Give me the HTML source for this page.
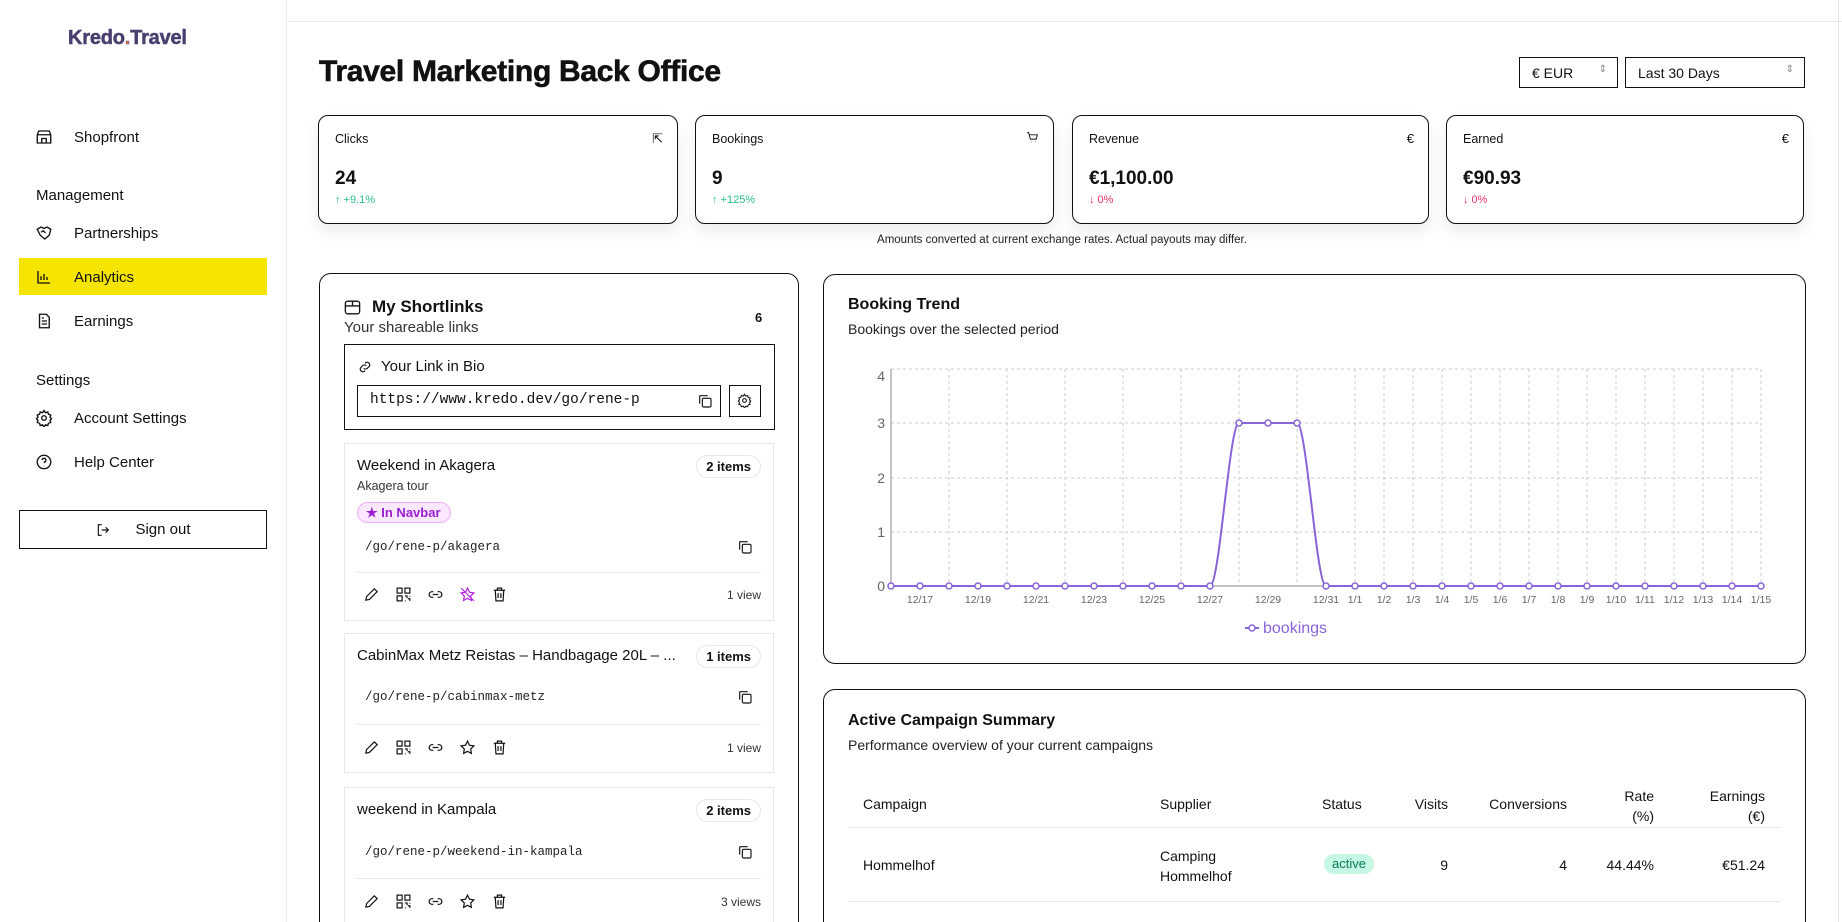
<!DOCTYPE html>
<html style="width:1842px;height:922px;overflow:hidden"><head><meta charset="utf-8"><style>
*{box-sizing:border-box;margin:0;padding:0}
body{width:1842px;height:922px;overflow:hidden;background:#fff;font-family:"Liberation Sans",sans-serif;color:#111;position:relative}
.a{position:absolute}
.side{left:0;top:0;width:287px;height:922px;border-right:1px solid #eee;background:#fff}
.nav{position:absolute;left:35px;font-size:15px;color:#111;display:flex;align-items:center}
.nav svg{width:18px;height:18px;margin-right:21px;fill:none;stroke:#111;stroke-width:1.8}
.lbl{position:absolute;left:36px;font-size:15px;color:#111}
.card{position:absolute;top:115px;height:109px;border:1px solid #111;border-radius:10px;box-shadow:0 8px 16px rgba(0,0,0,.08);background:#fff}
.card .t{position:absolute;left:16px;top:16px;font-size:12.5px}
.card .ic{position:absolute;right:14px;top:15px;font-size:13px}
.card .v{position:absolute;left:16px;top:52px;font-size:19px;font-weight:bold}
.card .c{position:absolute;left:16px;top:78px;font-size:11px}
.panel{position:absolute;border:1px solid #111;border-radius:12px;background:#fff}
.item{position:absolute;left:344px;width:430px;border:1px solid #e5e7eb;background:#fff}
.item .tt{position:absolute;left:12px;font-size:15px;color:#111}
.badge{position:absolute;right:12px;border:1px solid #e5e7eb;border-radius:12px;font-size:13px;font-weight:bold;padding:3px 9px}
.slug{position:absolute;left:20px;font-family:"Liberation Mono",monospace;font-size:12.5px;color:#222}
.div{position:absolute;left:12px;right:12px;height:1px;background:#e5e7eb}
.acts{position:absolute;left:18px;display:flex;gap:15px}
.acts svg{width:17px;height:17px;fill:none;stroke:#111;stroke-width:1.7}
.views{position:absolute;right:12px;font-size:12px;color:#333}
.cp{position:absolute;right:20px;width:16px;height:16px}
svg.s{fill:none;stroke:#111;stroke-width:1.7}
</style></head><body>

<div class="a side">
  <div class="a" style="left:68px;top:27px;font-size:20px;font-weight:bold;color:#4a3f6e;letter-spacing:-0.2px;-webkit-text-stroke:0.5px #4a3f6e">Kredo<span style="color:#f07a4a">.</span>Travel</div>
  <div class="nav" style="top:128px"><svg viewBox="0 0 24 24"><path d="M3 9l2-5h14l2 5M3 9v11h18V9M3 9h18M9 20v-6h6v6"/></svg>Shopfront</div>
  <div class="lbl" style="top:187px">Management</div>
  <div class="nav" style="top:224px"><svg viewBox="0 0 24 24"><path d="M3 7l5-3 4 2 4-2 5 3-2 8-6 5-6-5z M8 11l3-2 3 3"/></svg>Partnerships</div>
  <div class="a" style="left:19px;top:258px;width:248px;height:37px;background:#f5e400"></div>
  <div class="nav" style="top:268px"><svg viewBox="0 0 24 24"><path d="M4 4v16h16M8 16v-5M12 16V8M16 16v-4"/></svg>Analytics</div>
  <div class="nav" style="top:312px"><svg viewBox="0 0 24 24"><path d="M6 3h9l4 4v14H6z M9 12h7M9 16h7M9 8h3"/></svg>Earnings</div>
  <div class="lbl" style="top:372px">Settings</div>
  <div class="nav" style="top:409px"><svg viewBox="0 0 24 24"><circle cx="12" cy="12" r="3"/><path d="M12 2l2 3 3-1 1 3 3 1-1 3 2 2-2 2 1 3-3 1-1 3-3-1-2 3-2-3-3 1-1-3-3-1 1-3-2-2 2-2-1-3 3-1 1-3 3 1z"/></svg>Account Settings</div>
  <div class="nav" style="top:453px"><svg viewBox="0 0 24 24"><circle cx="12" cy="12" r="9"/><path d="M9.5 9.5a2.5 2.5 0 1 1 3 2.5v1.5M12 17v.5"/></svg>Help Center</div>
  <div class="a" style="left:19px;top:510px;width:248px;height:39px;border:1.5px solid #111;display:flex;align-items:center;justify-content:center;font-size:15px">
    <svg class="s" viewBox="0 0 24 24" style="width:16px;height:16px;margin-right:24px"><path d="M10 4H5v16h5M10 12h10M16 8l4 4-4 4"/></svg>Sign out</div>
</div>

<div class="a" style="left:288px;top:21px;width:1554px;height:1px;background:#e8e8e8"></div>
<div class="a" style="left:1838px;top:0;width:1px;height:922px;background:#e5e5e5"></div>

<div class="a" style="left:319px;top:55px;font-size:30px;font-weight:bold;letter-spacing:-0.3px;-webkit-text-stroke:0.6px #111">Travel Marketing Back Office</div>
<div class="a" style="left:1519px;top:57px;width:99px;height:31px;border:1.5px solid #111;font-size:14px;padding:7px 12px">€ EUR<span style="position:absolute;right:10px;top:6px;font-size:10px;color:#888">⇕</span></div>
<div class="a" style="left:1625px;top:57px;width:180px;height:31px;border:1.5px solid #111;font-size:14px;padding:7px 12px">Last 30 Days<span style="position:absolute;right:10px;top:6px;font-size:10px;color:#888">⇕</span></div>

<div class="card" style="left:318px;width:360px"><div class="t">Clicks</div><div class="ic">⇱</div><div class="v">24</div><div class="c" style="color:#2bbf8a">↑ +9.1%</div></div>
<div class="card" style="left:695px;width:359px"><div class="t">Bookings</div><div class="ic"><svg class="s" viewBox="0 0 24 24" style="width:13px;height:13px"><path d="M2 3h3l3 12h11l2-8H6M9 20h1M17 20h1"/></svg></div><div class="v">9</div><div class="c" style="color:#2bbf8a">↑ +125%</div></div>
<div class="card" style="left:1072px;width:357px"><div class="t">Revenue</div><div class="ic">€</div><div class="v">€1,100.00</div><div class="c" style="color:#f0306a">↓ 0%</div></div>
<div class="card" style="left:1446px;width:358px"><div class="t">Earned</div><div class="ic">€</div><div class="v">€90.93</div><div class="c" style="color:#f0306a">↓ 0%</div></div>
<div class="a" style="left:760px;top:234px;width:604px;text-align:center;font-size:11.5px;color:#222">Amounts converted at current exchange rates. Actual payouts may differ.</div>

<!-- Shortlinks -->
<div class="panel" style="left:319px;top:273px;width:480px;height:700px"></div>
<svg class="a s" viewBox="0 0 24 24" style="left:343px;top:298px;width:19px;height:19px"><rect x="3" y="4" width="18" height="16" rx="3"/><path d="M3 10h18M12 4v6"/></svg>
<div class="a" style="left:372px;top:297px;font-size:17px;font-weight:bold">My Shortlinks</div>
<div class="a" style="left:344px;top:319px;font-size:15px;color:#333">Your shareable links</div>
<div class="a" style="left:755px;top:310px;font-size:13px;font-weight:bold">6</div>
<div class="a" style="left:344px;top:344px;width:431px;height:86px;border:1.5px solid #111"></div>
<svg class="a s" viewBox="0 0 24 24" style="left:357px;top:359px;width:16px;height:16px"><path d="M10 14a4 4 0 0 0 5.5 0l3-3a4 4 0 0 0-5.5-5.5l-1 1M14 10a4 4 0 0 0-5.5 0l-3 3a4 4 0 0 0 5.5 5.5l1-1"/></svg>
<div class="a" style="left:381px;top:358px;font-size:15px">Your Link in Bio</div>
<div class="a" style="left:357px;top:385px;width:364px;height:32px;border:1.5px solid #111;font-family:'Liberation Mono',monospace;font-size:14.5px;padding:6px 12px">https://www.kredo.dev/go/rene-p</div>
<svg class="a s" viewBox="0 0 24 24" style="left:697px;top:393px;width:16px;height:16px"><rect x="8" y="8" width="13" height="13" rx="2"/><path d="M4 16V5a1 1 0 0 1 1-1h11"/></svg>
<div class="a" style="left:729px;top:385px;width:32px;height:32px;border:1.5px solid #111"></div>
<svg class="a s" viewBox="0 0 24 24" style="left:737px;top:393px;width:15px;height:15px"><circle cx="12" cy="12" r="3"/><path d="M12 2l2 3 3-1 1 3 3 1-1 3 2 2-2 2 1 3-3 1-1 3-3-1-2 3-2-3-3 1-1-3-3-1 1-3-2-2 2-2-1-3 3-1 1-3 3 1z"/></svg>

<div class="item" style="top:443px;height:178px">
  <div class="tt" style="top:13px">Weekend in Akagera</div>
  <div class="badge" style="top:11px">2 items</div>
  <div class="a" style="left:12px;top:35px;font-size:12.5px;color:#333">Akagera tour</div>
  <div class="a" style="left:12px;top:58px;height:21px;padding:2px 9px 0 8px;border:1px solid #f0abfc;background:#fae8ff;border-radius:11px;font-size:13px;font-weight:bold;color:#9b1fd1">★ In Navbar</div>
  <div class="slug" style="top:96px">/go/rene-p/akagera</div>
  <svg class="cp s" viewBox="0 0 24 24" style="top:95px"><rect x="8" y="8" width="13" height="13" rx="2"/><path d="M4 16V5a1 1 0 0 1 1-1h11"/></svg>
  <div class="div" style="top:128px"></div>
  <div class="acts" style="top:142px">
    <svg viewBox="0 0 24 24"><path d="M4 20l1-5L16 4l4 4L9 19z"/></svg>
    <svg viewBox="0 0 24 24"><rect x="3" y="3" width="7" height="7"/><rect x="14" y="3" width="7" height="7"/><rect x="3" y="14" width="7" height="7"/><path d="M14 14h3v3M21 14v1M14 21h1M18 18h3v3"/></svg>
    <svg viewBox="0 0 24 24"><path d="M9 8H7a4 4 0 0 0 0 8h2M15 8h2a4 4 0 0 1 0 8h-2M8 12h8"/></svg>
    <svg viewBox="0 0 24 24" style="stroke:#b020e0"><path d="M12 3l2.8 5.8 6.2.9-4.5 4.4 1 6.2L12 17.4 6.5 20.3l1-6.2L3 9.7l6.2-.9z M3 3l18 18"/></svg>
    <svg viewBox="0 0 24 24"><path d="M4 6h16M9 6V3h6v3M6 6l1 15h10l1-15M10 10v7M14 10v7"/></svg>
  </div>
  <div class="views" style="top:144px">1 view</div>
</div>

<div class="item" style="top:633px;height:140px">
  <div class="tt" style="top:13px">CabinMax Metz Reistas – Handbagage 20L – ...</div>
  <div class="badge" style="top:11px">1 items</div>
  <div class="slug" style="top:56px">/go/rene-p/cabinmax-metz</div>
  <svg class="cp s" viewBox="0 0 24 24" style="top:55px"><rect x="8" y="8" width="13" height="13" rx="2"/><path d="M4 16V5a1 1 0 0 1 1-1h11"/></svg>
  <div class="div" style="top:90px"></div>
  <div class="acts" style="top:105px">
    <svg viewBox="0 0 24 24"><path d="M4 20l1-5L16 4l4 4L9 19z"/></svg>
    <svg viewBox="0 0 24 24"><rect x="3" y="3" width="7" height="7"/><rect x="14" y="3" width="7" height="7"/><rect x="3" y="14" width="7" height="7"/><path d="M14 14h3v3M21 14v1M14 21h1M18 18h3v3"/></svg>
    <svg viewBox="0 0 24 24"><path d="M9 8H7a4 4 0 0 0 0 8h2M15 8h2a4 4 0 0 1 0 8h-2M8 12h8"/></svg>
    <svg viewBox="0 0 24 24"><path d="M12 3l2.8 5.8 6.2.9-4.5 4.4 1 6.2L12 17.4 6.5 20.3l1-6.2L3 9.7l6.2-.9z"/></svg>
    <svg viewBox="0 0 24 24"><path d="M4 6h16M9 6V3h6v3M6 6l1 15h10l1-15M10 10v7M14 10v7"/></svg>
  </div>
  <div class="views" style="top:107px">1 view</div>
</div>

<div class="item" style="top:787px;height:160px">
  <div class="tt" style="top:13px">weekend in Kampala</div>
  <div class="badge" style="top:11px">2 items</div>
  <div class="slug" style="top:57px">/go/rene-p/weekend-in-kampala</div>
  <svg class="cp s" viewBox="0 0 24 24" style="top:56px"><rect x="8" y="8" width="13" height="13" rx="2"/><path d="M4 16V5a1 1 0 0 1 1-1h11"/></svg>
  <div class="div" style="top:90px"></div>
  <div class="acts" style="top:105px">
    <svg viewBox="0 0 24 24"><path d="M4 20l1-5L16 4l4 4L9 19z"/></svg>
    <svg viewBox="0 0 24 24"><rect x="3" y="3" width="7" height="7"/><rect x="14" y="3" width="7" height="7"/><rect x="3" y="14" width="7" height="7"/><path d="M14 14h3v3M21 14v1M14 21h1M18 18h3v3"/></svg>
    <svg viewBox="0 0 24 24"><path d="M9 8H7a4 4 0 0 0 0 8h2M15 8h2a4 4 0 0 1 0 8h-2M8 12h8"/></svg>
    <svg viewBox="0 0 24 24"><path d="M12 3l2.8 5.8 6.2.9-4.5 4.4 1 6.2L12 17.4 6.5 20.3l1-6.2L3 9.7l6.2-.9z"/></svg>
    <svg viewBox="0 0 24 24"><path d="M4 6h16M9 6V3h6v3M6 6l1 15h10l1-15M10 10v7M14 10v7"/></svg>
  </div>
  <div class="views" style="top:107px">3 views</div>
</div>

<!-- Booking Trend -->
<div class="panel" style="left:823px;top:274px;width:983px;height:390px"></div>
<div class="a" style="left:848px;top:296px;font-size:16px;font-weight:bold">Booking Trend</div>
<div class="a" style="left:848px;top:321px;font-size:14px;color:#222">Bookings over the selected period</div>
<svg class="a" style="left:0;top:0" width="1842" height="922">
  <g stroke="#ccc" stroke-dasharray="3 3" stroke-width="1">
    <line x1="891" y1="369" x2="1761" y2="369"/><line x1="891" y1="423" x2="1761" y2="423"/><line x1="891" y1="478" x2="1761" y2="478"/><line x1="891" y1="532" x2="1761" y2="532"/>
    <line x1="949" y1="369" x2="949" y2="586"/><line x1="1007" y1="369" x2="1007" y2="586"/><line x1="1065" y1="369" x2="1065" y2="586"/><line x1="1123" y1="369" x2="1123" y2="586"/><line x1="1181" y1="369" x2="1181" y2="586"/><line x1="1239" y1="369" x2="1239" y2="586"/><line x1="1297" y1="369" x2="1297" y2="586"/>
    <line x1="1355" y1="369" x2="1355" y2="586"/><line x1="1384" y1="369" x2="1384" y2="586"/><line x1="1413" y1="369" x2="1413" y2="586"/><line x1="1442" y1="369" x2="1442" y2="586"/><line x1="1471" y1="369" x2="1471" y2="586"/><line x1="1500" y1="369" x2="1500" y2="586"/><line x1="1529" y1="369" x2="1529" y2="586"/><line x1="1558" y1="369" x2="1558" y2="586"/><line x1="1587" y1="369" x2="1587" y2="586"/><line x1="1616" y1="369" x2="1616" y2="586"/><line x1="1645" y1="369" x2="1645" y2="586"/><line x1="1674" y1="369" x2="1674" y2="586"/><line x1="1703" y1="369" x2="1703" y2="586"/><line x1="1732" y1="369" x2="1732" y2="586"/><line x1="1761" y1="369" x2="1761" y2="586"/>
  </g>
  <line x1="891" y1="369" x2="891" y2="586" stroke="#888"/>
  <line x1="891" y1="586" x2="1761" y2="586" stroke="#888"/>
  <g font-size="14" fill="#666" text-anchor="end" font-family="Liberation Sans"><text x="885" y="381">4</text><text x="885" y="428">3</text><text x="885" y="483">2</text><text x="885" y="537">1</text><text x="885" y="591">0</text></g>
  <g font-size="10.5" fill="#666" text-anchor="middle" font-family="Liberation Sans">
    <text x="920" y="603">12/17</text><text x="978" y="603">12/19</text><text x="1036" y="603">12/21</text><text x="1094" y="603">12/23</text><text x="1152" y="603">12/25</text><text x="1210" y="603">12/27</text><text x="1268" y="603">12/29</text><text x="1326" y="603">12/31</text>
    <text x="1355" y="603">1/1</text><text x="1384" y="603">1/2</text><text x="1413" y="603">1/3</text><text x="1442" y="603">1/4</text><text x="1471" y="603">1/5</text><text x="1500" y="603">1/6</text><text x="1529" y="603">1/7</text><text x="1558" y="603">1/8</text><text x="1587" y="603">1/9</text><text x="1616" y="603">1/10</text><text x="1645" y="603">1/11</text><text x="1674" y="603">1/12</text><text x="1703" y="603">1/13</text><text x="1732" y="603">1/14</text><text x="1761" y="603">1/15</text>
  </g>
  <path d="M891,586 L1210,586 C1219.7,586 1229.3,423 1239,423 L1297,423 C1306.7,423 1316.3,586 1326,586 L1761,586" fill="none" stroke="#8b63d9" stroke-width="2"/>
  <g fill="#fff" stroke="#8b63d9" stroke-width="1.5">
    <circle cx="891" cy="586" r="3"/><circle cx="920" cy="586" r="3"/><circle cx="949" cy="586" r="3"/><circle cx="978" cy="586" r="3"/><circle cx="1007" cy="586" r="3"/><circle cx="1036" cy="586" r="3"/><circle cx="1065" cy="586" r="3"/><circle cx="1094" cy="586" r="3"/><circle cx="1123" cy="586" r="3"/><circle cx="1152" cy="586" r="3"/><circle cx="1181" cy="586" r="3"/><circle cx="1210" cy="586" r="3"/>
    <circle cx="1239" cy="423" r="3"/><circle cx="1268" cy="423" r="3"/><circle cx="1297" cy="423" r="3"/>
    <circle cx="1326" cy="586" r="3"/><circle cx="1355" cy="586" r="3"/><circle cx="1384" cy="586" r="3"/><circle cx="1413" cy="586" r="3"/><circle cx="1442" cy="586" r="3"/><circle cx="1471" cy="586" r="3"/><circle cx="1500" cy="586" r="3"/><circle cx="1529" cy="586" r="3"/><circle cx="1558" cy="586" r="3"/><circle cx="1587" cy="586" r="3"/><circle cx="1616" cy="586" r="3"/><circle cx="1645" cy="586" r="3"/><circle cx="1674" cy="586" r="3"/><circle cx="1703" cy="586" r="3"/><circle cx="1732" cy="586" r="3"/><circle cx="1761" cy="586" r="3"/>
  </g>
  <line x1="1245" y1="628" x2="1259" y2="628" stroke="#8b63d9" stroke-width="2"/><circle cx="1252" cy="628" r="3" fill="#fff" stroke="#8b63d9" stroke-width="1.5"/>
  <text x="1263" y="633" font-size="16" fill="#8b63d9" font-family="Liberation Sans">bookings</text>
</svg>

<!-- Campaign -->
<div class="panel" style="left:823px;top:689px;width:983px;height:300px"></div>
<div class="a" style="left:848px;top:712px;font-size:16px;font-weight:bold">Active Campaign Summary</div>
<div class="a" style="left:848px;top:737px;font-size:14px;color:#222">Performance overview of your current campaigns</div>
<div class="a" style="left:848px;top:827px;width:932px;height:1px;background:#e5e7eb"></div>
<div class="a" style="left:848px;top:901px;width:932px;height:1px;background:#e5e7eb"></div>
<div style="font-size:14px">
<div class="a" style="left:863px;top:796px">Campaign</div>
<div class="a" style="left:1160px;top:796px">Supplier</div>
<div class="a" style="left:1322px;top:796px">Status</div>
<div class="a" style="left:1400px;top:796px;width:48px;text-align:right">Visits</div>
<div class="a" style="left:1467px;top:796px;width:100px;text-align:right">Conversions</div>
<div class="a" style="left:1594px;top:786px;width:60px;text-align:right;line-height:20px">Rate<br>(%)</div>
<div class="a" style="left:1685px;top:786px;width:80px;text-align:right;line-height:20px">Earnings<br>(€)</div>
<div class="a" style="left:863px;top:857px">Hommelhof</div>
<div class="a" style="left:1160px;top:846px;line-height:20px">Camping<br>Hommelhof</div>
<div class="a" style="left:1324px;top:854px;height:20px;padding:2px 8px;background:#c6f7e2;border-radius:10px;font-size:13px;color:#0b7a55">active</div>
<div class="a" style="left:1400px;top:857px;width:48px;text-align:right">9</div>
<div class="a" style="left:1467px;top:857px;width:100px;text-align:right">4</div>
<div class="a" style="left:1584px;top:857px;width:70px;text-align:right">44.44%</div>
<div class="a" style="left:1685px;top:857px;width:80px;text-align:right">€51.24</div>
</div>
</body></html>
